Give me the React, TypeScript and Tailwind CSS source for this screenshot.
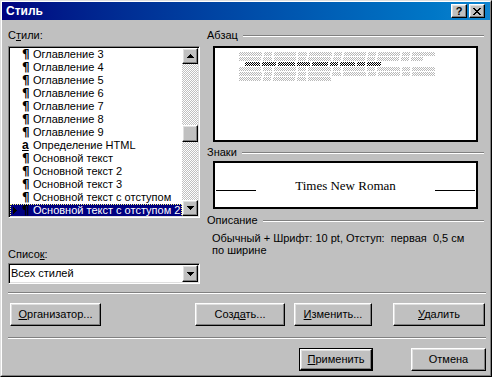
import React from "react";

const raised =
  "bg-[#c0c0c0] border border-t-white border-l-white border-r-black border-b-black shadow-[inset_-1px_-1px_#808080,inset_1px_1px_#dfdfdf]";
const sunken =
  "border border-t-[#808080] border-l-[#808080] border-r-white border-b-white shadow-[inset_1px_1px_#000000,inset_-1px_-1px_#dfdfdf]";

function ArrowUp() {
  return (
    <svg width="7" height="4" viewBox="0 0 7 4" shapeRendering="crispEdges">
      <path d="M3 0h1v1h1v1h1v1h1v1H0V3h1V2h1V1h1z" fill="#000" />
    </svg>
  );
}
function ArrowDown() {
  return (
    <svg width="7" height="4" viewBox="0 0 7 4" shapeRendering="crispEdges">
      <path d="M0 0h7v1h-1v1h-1v1h-1v1h-1v-1h-1v-1h-1v-1h-1z" fill="#000" />
    </svg>
  );
}

function GroupLabel({ children }: { children: React.ReactNode }) {
  return (
    <div className="flex items-center h-[13px] leading-[13px]">
      <span>{children}</span>
      <div className="flex-1 ml-[5px] mr-[2px] h-[2px] border-t border-t-[#808080] border-b border-b-white" />
    </div>
  );
}

function DLine({ ws, dark, indent }: { ws: number[]; dark?: boolean; indent?: boolean }) {
  return (
    <div className={"flex gap-[2px] h-[4px] mb-[1px] " + (indent ? "pl-[6px]" : "")}>
      {ws.map((w, i) => (
        <div
          key={i}
          className={
            dark
              ? "h-full bg-[image:repeating-conic-gradient(#000000_0_25%,#ffffff_0_50%)] bg-[length:2px_2px]"
              : "h-full bg-[image:repeating-conic-gradient(#b8b8b8_0_25%,#ffffff_0_50%)] bg-[length:2px_2px]"
          }
          style={{ width: w }}
        />
      ))}
    </div>
  );
}

type Item = { t: string; k: "p" | "a"; sel?: boolean };
const items: Item[] = [
  { t: "Оглавление 3", k: "p" },
  { t: "Оглавление 4", k: "p" },
  { t: "Оглавление 5", k: "p" },
  { t: "Оглавление 6", k: "p" },
  { t: "Оглавление 7", k: "p" },
  { t: "Оглавление 8", k: "p" },
  { t: "Оглавление 9", k: "p" },
  { t: "Определение HTML", k: "a" },
  { t: "Основной текст", k: "p" },
  { t: "Основной текст 2", k: "p" },
  { t: "Основной текст 3", k: "p" },
  { t: "Основной текст с отступом", k: "p" },
  { t: "Основной текст с отступом 2", k: "p", sel: true },
];

function Btn({ w, children, def }: { w: number; children: React.ReactNode; def?: boolean }) {
  if (def) {
    return (
      <div className="h-[23px] border border-black flex" style={{ width: w }}>
        <div className={raised + " flex-1 flex items-center justify-center"}>{children}</div>
      </div>
    );
  }
  return (
    <div className={raised + " h-[23px] flex items-center justify-center"} style={{ width: w }}>
      {children}
    </div>
  );
}

export default function App() {
  return (
    <div className="w-[492px] h-[377px] bg-[#c0c0c0] border border-t-[#dfdfdf] border-l-[#dfdfdf] border-r-black border-b-black font-['Liberation_Sans',Arial,sans-serif] text-[11px] leading-[13px] text-black overflow-hidden">
      <div className="h-full border border-t-white border-l-white border-r-[#808080] border-b-[#808080] flex flex-col">
        {/* Title bar */}
        <div className="h-[18px] flex items-center pl-[4px] pr-[5px] bg-linear-to-r from-[#000080] to-[#1084d0]">
          <span className="text-white font-bold text-[12px] flex-1">Стиль</span>
          <div className={raised + " w-[16px] h-[14px] flex items-center justify-center font-bold text-[11px] leading-[11px]"}>?</div>
          <div className={raised + " w-[16px] h-[14px] ml-[2px] flex items-center justify-center"}>
            <svg width="8" height="7" viewBox="0 0 8 7" shapeRendering="crispEdges">
              <path d="M0 0h2v1h1v1h2V1h1V0h2v1h-1v1h-1v1h-1v1h1v1h1v1h1v1h-2v-1h-1v-1h-2v1h-1v1H0v-1h1V5h1V4h1V3H2V2H1V1H0z" fill="#000" />
            </svg>
          </div>
        </div>

        {/* Body */}
        <div className="flex flex-col pl-[6px] pr-[4px]">
          <div className="flex mt-[9px]">
            {/* Left column */}
            <div className="w-[192px] flex flex-col">
              <div className="h-[13px]">
                С<u>т</u>или:
              </div>
              <div className={sunken + " mt-[4px] h-[172px] bg-white flex p-[1px]"}>
                <div className="flex-1 flex flex-col overflow-hidden">
                  {items.map((it, i) => (
                    <div
                      key={i}
                      className={
                        "h-[13px] flex items-center whitespace-nowrap shrink-0 " +
                        (it.sel ? "bg-[#000080] text-white outline-1 outline-dotted outline-[#ffff80] -outline-offset-1" : "")
                      }
                    >
                      <div className="w-[12px] flex items-center pl-[3px]">
                        {it.sel && (
                          <svg width="4" height="7" viewBox="0 0 4 7" shapeRendering="crispEdges">
                            <path d="M0 0h1v1h1v1h1v1h1v1h-1v1h-1v1h-1v1H0z" fill="#000" />
                          </svg>
                        )}
                      </div>
                      <div className="w-[11px] font-bold text-black text-[12px] leading-[13px] font-['DejaVu_Sans',sans-serif]">
                        {it.k === "p" ? "¶" : <u className="font-['Liberation_Sans',Arial,sans-serif]">a</u>}
                      </div>
                      <span>{it.t}</span>
                    </div>
                  ))}
                </div>
                <div className="w-[16px] flex flex-col">
                  <div className={raised + " h-[16px] flex items-center justify-center"}>
                    <ArrowUp />
                  </div>
                  <div className="flex-1 bg-[image:repeating-conic-gradient(#c0c0c0_0_25%,#ffffff_0_50%)] bg-[length:2px_2px]">
                    <div className={raised + " h-[17px] mt-[61px]"} />
                  </div>
                  <div className={raised + " h-[16px] flex items-center justify-center"}>
                    <ArrowDown />
                  </div>
                </div>
              </div>
              <div className="mt-[30px] h-[13px]">
                Списо<u>к</u>:
              </div>
              <div className={sunken + " mt-[2px] h-[21px] bg-white flex items-center p-[1px]"}>
                <span className="flex-1 pl-[1px]">Всех стилей</span>
                <div className={raised + " w-[16px] h-[17px] flex items-center justify-center"}>
                  <ArrowDown />
                </div>
              </div>
            </div>

            {/* Right column */}
            <div className="ml-[7px] flex-1 flex flex-col">
              <GroupLabel>Абзац</GroupLabel>
              <div className="ml-[6px] w-[265px] h-[96px] mt-[4px] border-2 border-black bg-white pt-[4px] pl-[24px]">
                <DLine ws={[23, 8, 22, 9, 23, 8, 22, 8, 22, 8, 23]} />
                <DLine ws={[22, 9, 22, 8, 23, 8, 22, 8, 22, 8, 12]} />
                <DLine ws={[15, 14, 17, 13, 16, 8, 15, 8, 14]} dark indent />
                <DLine ws={[22, 9, 22, 8, 23, 8, 22, 8, 23, 8, 23]} />
                <DLine ws={[23, 8, 22, 8, 22, 9, 23, 8, 22, 8, 23]} />
                <DLine ws={[22, 8, 22, 9, 23]} />
              </div>
              <div className="mt-[4px]">
                <GroupLabel>Знаки</GroupLabel>
              </div>
              <div className="ml-[6px] w-[265px] h-[48px] mt-[2px] border-2 border-black bg-white flex items-center px-[1px]">
                <div className="w-[40px] h-px bg-black mt-[10px]" />
                <div className="flex-1 text-center font-['Liberation_Serif','Times_New_Roman',serif] text-[13px] leading-[15px]">
                  Times New Roman
                </div>
                <div className="w-[40px] h-px bg-black mt-[10px]" />
              </div>
              <div className="mt-[5px]">
                <GroupLabel>Описание</GroupLabel>
              </div>
              <div className="ml-[5px] mt-[5px] leading-[12px] whitespace-pre">
                {"Обычный + Шрифт: 10 pt, Отступ:  первая  0,5 см\nпо ширине"}
              </div>
            </div>
          </div>

          {/* separator */}
          <div className="mt-[8px] h-[2px] border-t border-t-[#808080] border-b border-b-white" />

          <div className="flex mt-[9px]">
            <div className="ml-[2px]">
              <Btn w={91}>
                <span>
                  <u>О</u>рганизатор...
                </span>
              </Btn>
            </div>
            <div className="ml-[94px]">
              <Btn w={90}>
                <span>
                  Созд<u>а</u>ть...
                </span>
              </Btn>
            </div>
            <div className="ml-[9px]">
              <Btn w={78}>
                <span>
                  <u>И</u>зменить...
                </span>
              </Btn>
            </div>
            <div className="ml-[21px]">
              <Btn w={92}>
                <span>
                  <u>У</u>далить
                </span>
              </Btn>
            </div>
          </div>

          <div className="mt-[11px] h-[2px] border-t border-t-[#808080] border-b border-b-white" />

          <div className="flex mt-[9px]">
            <div className="ml-[291px]">
              <Btn w={74} def>
                <span>
                  <u>П</u>рименить
                </span>
              </Btn>
            </div>
            <div className="ml-[38px]">
              <Btn w={75}>
                <span>Отмена</span>
              </Btn>
            </div>
          </div>
        </div>
      </div>
    </div>
  );
}
